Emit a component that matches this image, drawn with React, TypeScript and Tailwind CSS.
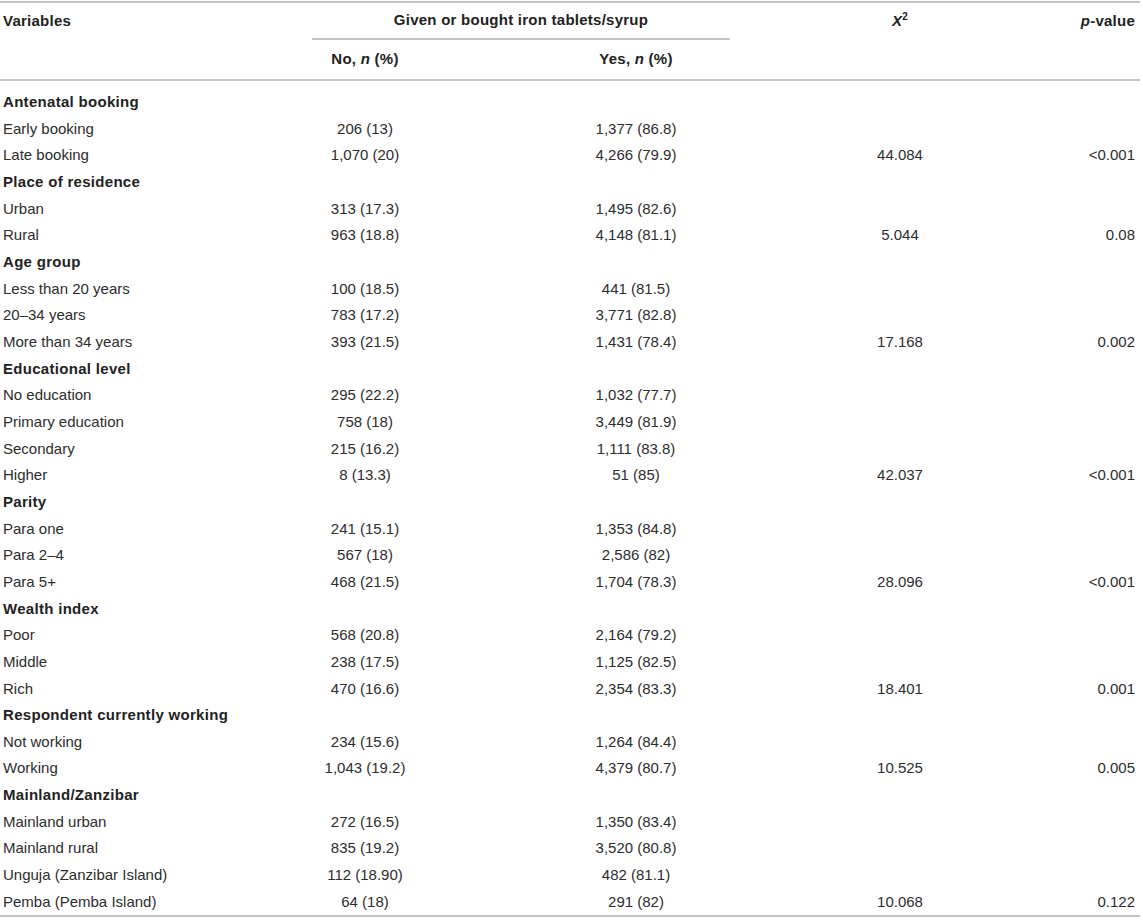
type Row = { label: string; bold?: boolean; no?: string; yes?: string; chi?: string; p?: string };

const rows: Row[] = [
    { label: "Antenatal booking", bold: true },
    { label: "Early booking", no: "206 (13)", yes: "1,377 (86.8)" },
    { label: "Late booking", no: "1,070 (20)", yes: "4,266 (79.9)", chi: "44.084", p: "<0.001" },
    { label: "Place of residence", bold: true },
    { label: "Urban", no: "313 (17.3)", yes: "1,495 (82.6)" },
    { label: "Rural", no: "963 (18.8)", yes: "4,148 (81.1)", chi: "5.044", p: "0.08" },
    { label: "Age group", bold: true },
    { label: "Less than 20 years", no: "100 (18.5)", yes: "441 (81.5)" },
    { label: "20–34 years", no: "783 (17.2)", yes: "3,771 (82.8)" },
    { label: "More than 34 years", no: "393 (21.5)", yes: "1,431 (78.4)", chi: "17.168", p: "0.002" },
    { label: "Educational level", bold: true },
    { label: "No education", no: "295 (22.2)", yes: "1,032 (77.7)" },
    { label: "Primary education", no: "758 (18)", yes: "3,449 (81.9)" },
    { label: "Secondary", no: "215 (16.2)", yes: "1,111 (83.8)" },
    { label: "Higher", no: "8 (13.3)", yes: "51 (85)", chi: "42.037", p: "<0.001" },
    { label: "Parity", bold: true },
    { label: "Para one", no: "241 (15.1)", yes: "1,353 (84.8)" },
    { label: "Para 2–4", no: "567 (18)", yes: "2,586 (82)" },
    { label: "Para 5+", no: "468 (21.5)", yes: "1,704 (78.3)", chi: "28.096", p: "<0.001" },
    { label: "Wealth index", bold: true },
    { label: "Poor", no: "568 (20.8)", yes: "2,164 (79.2)" },
    { label: "Middle", no: "238 (17.5)", yes: "1,125 (82.5)" },
    { label: "Rich", no: "470 (16.6)", yes: "2,354 (83.3)", chi: "18.401", p: "0.001" },
    { label: "Respondent currently working", bold: true },
    { label: "Not working", no: "234 (15.6)", yes: "1,264 (84.4)" },
    { label: "Working", no: "1,043 (19.2)", yes: "4,379 (80.7)", chi: "10.525", p: "0.005" },
    { label: "Mainland/Zanzibar", bold: true },
    { label: "Mainland urban", no: "272 (16.5)", yes: "1,350 (83.4)" },
    { label: "Mainland rural", no: "835 (19.2)", yes: "3,520 (80.8)" },
    { label: "Unguja (Zanzibar Island)", no: "112 (18.90)", yes: "482 (81.1)" },
    { label: "Pemba (Pemba Island)", no: "64 (18)", yes: "291 (82)", chi: "10.068", p: "0.122" },
];

// 6 columns: label | no | spacer | yes | chi | p
const cols = "grid grid-cols-[312px_106px_124px_188px_340px_70px]";

export default function App() {
    return (
        <div className="w-[1143px] h-[920px] bg-white text-[15px] text-[#2d2d2d] font-['Liberation_Sans',Arial,sans-serif] pt-px">
            <div className="w-[1140px] border-t-2 border-b-2 border-[#c4c4c4]">
                {/* header */}
                <div className={`${cols} border-b-2 border-[#c4c4c4] font-bold text-[#222] tracking-[0.25px]`}>
                    <div className="h-[37px] flex items-center pl-[3px]">Variables</div>
                    <div className="col-span-3 h-[37px] flex items-center justify-center border-b-2 border-[#c4c4c4]">
                        Given or bought iron tablets/syrup
                    </div>
                    <div className="h-[37px] flex items-center justify-center">
                        <span><i>X</i><sup className="text-[10px] -top-[6px]">2</sup></span>
                    </div>
                    <div className="h-[37px] flex items-center justify-end pr-[5px] whitespace-nowrap">
                        <span><i>p</i>-value</span>
                    </div>
                    <div className="h-[39px]" />
                    <div className="h-[39px] flex items-center justify-center whitespace-nowrap">
                        <span>No, <i>n</i> (%)</span>
                    </div>
                    <div className="h-[39px]" />
                    <div className="h-[39px] flex items-center justify-center">
                        <span>Yes, <i>n</i> (%)</span>
                    </div>
                    <div className="h-[39px]" />
                    <div className="h-[39px]" />
                </div>

                {/* body */}
                <div className="pt-[8px]">
                    {rows.map((r) => (
                        <div key={r.label} className={`${cols} h-[26.67px] items-center`}>
                            <div className={`pl-[3px] whitespace-nowrap ${r.bold ? "font-bold text-[#222] tracking-[0.3px]" : ""}`}>{r.label}</div>
                            <div className="text-center whitespace-nowrap">{r.no}</div>
                            <div />
                            <div className="text-center whitespace-nowrap">{r.yes}</div>
                            <div className="text-center">{r.chi}</div>
                            <div className="text-right pr-[5px]">{r.p}</div>
                        </div>
                    ))}
                </div>
            </div>
        </div>
    );
}
